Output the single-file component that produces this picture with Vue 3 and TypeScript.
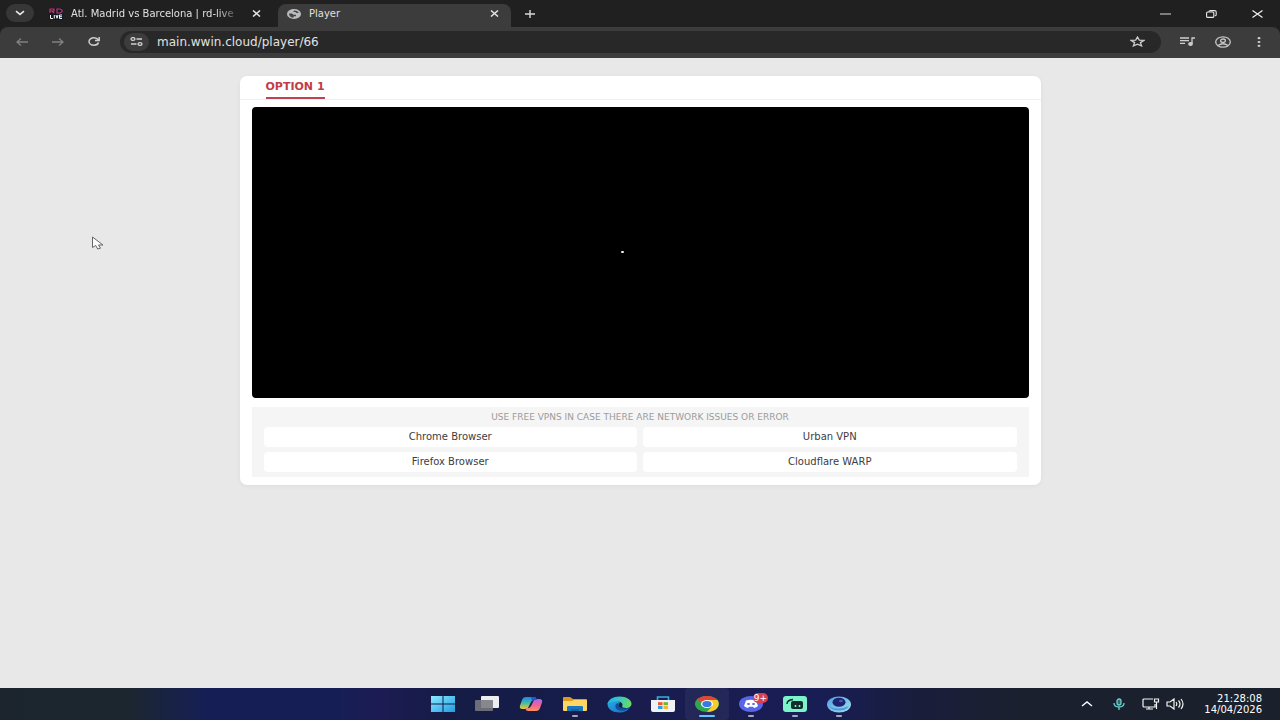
<script setup lang="ts">
import { ref } from 'vue'

interface VpnLink {
  label: string
  href: string
}

const address = ref('main.wwin.cloud/player/66')
const links: VpnLink[] = [
  { label: 'Chrome Browser', href: '#chrome' },
  { label: 'Urban VPN', href: '#urban' },
  { label: 'Firefox Browser', href: '#firefox' },
  { label: 'Cloudflare WARP', href: '#warp' },
]
</script>

<template>
  <div class="screen">
    <header class="browser">
      <div class="tabs">
        <button class="tab-search" aria-label="Search tabs">
          <svg width="10" height="6" viewBox="0 0 10 6" fill="none" stroke="#e8e8e8" stroke-width="1.6"><path d="M1 1.2l4 3.2 4-3.2" /></svg>
        </button>
        <div class="tab">
          <svg class="favicon" width="14" height="12" viewBox="0 0 14 12" fill="none">
            <rect width="14" height="12" fill="#101a24" />
            <path d="M1 5V1h4v2H1m2 0l2 2M8 1v4h3l2-1V2l-2-1z" stroke="#c2396f" stroke-width="1.2" />
            <path d="M1.5 7v3.5H4M5.3 7v3.5M7 7l1 3.3L9 7M13 7h-2.500v3.500H13M10.500 8.700H13" stroke="#f2f2f2" />
          </svg>
          <button class="tab-title faded">Atl. Madrid vs Barcelona | rd-live</button>
          <button class="tab-close" aria-label="Close Atl. Madrid tab">
            <svg width="9" height="7" viewBox="0 0 9 7" stroke="#e3e3e3" stroke-width="1.5"><path d="M1 .5l7 6M8 .5l-7 6" /></svg>
          </button>
        </div>
        <div class="tab active">
          <svg class="favicon" width="14" height="10" viewBox="0 0 14 10">
            <ellipse cx="7" cy="5" rx="7" ry="5" fill="#b9bbbc" />
            <path d="M2 4.500h3l1.500 1.300H9V7.300H7L6 8.700C3.500 8.500 1.800 6.500 2 4.500zM7.500 1.500c2 .1 3.700 1 4.300 2.500H9.500L8.500 3H6z" fill="#454647" />
          </svg>
          <button class="tab-title">Player</button>
          <button class="tab-close" aria-label="Close Player tab">
            <svg width="9" height="7" viewBox="0 0 9 7" stroke="#e3e3e3" stroke-width="1.5"><path d="M1 .5l7 6M8 .5l-7 6" /></svg>
          </button>
        </div>
        <button class="new-tab" aria-label="New tab">
          <svg width="12" height="8" viewBox="0 0 12 8" stroke="#d8d8d8" stroke-width="1.4"><path d="M1 4h10M6 0v8" /></svg>
        </button>
        <div class="window-controls">
          <button aria-label="Minimize"><svg width="11" height="8" viewBox="0 0 11 8"><path d="M0 4h11" stroke="#d8d8d8" /></svg></button>
          <button aria-label="Restore">
            <svg width="11" height="8" viewBox="0 0 11 8" fill="none" stroke="#e8e8e8" stroke-width="1.1"><rect x=".6" y="2" width="7.200" height="5.400" rx="1" /><path d="M3 1.800Q3 .6 4.500.6h4q1.700 0 1.700 1.500v2.600q0 1-1.500 1.100" /></svg>
          </button>
          <button aria-label="Close window"><svg width="11" height="8" viewBox="0 0 11 8" stroke="#f0f0f0" stroke-width="1.200"><path d="M.5.5l10 7M10.500.5l-10 7" /></svg></button>
        </div>
      </div>

      <nav class="toolbar" aria-label="Navigation">
        <button aria-label="Back"><svg width="12" height="8" viewBox="0 0 12 8" fill="none" stroke="#808080" stroke-width="1.300"><path d="M12 4H1M5 .5L1 4l4 3.500" /></svg></button>
        <button aria-label="Forward"><svg width="12" height="8" viewBox="0 0 12 8" fill="none" stroke="#808080" stroke-width="1.300"><path d="M0 4h11M7 .5L11 4 7 7.500" /></svg></button>
        <button aria-label="Reload"><svg width="12" height="9" viewBox="0 0 12 9" fill="none" stroke="#cfcfcf" stroke-width="1.500"><path d="M10.500 5.500C10 7.200 8.200 8.200 6 8.200 3.200 8.200 1 6.500 1 4.500S3.200.8 6 .8c2 0 3.500.7 4.600 2.300M11.200 0v3.500H7" /></svg></button>
        <div class="omnibox">
          <button class="site-info" aria-label="Site information">
            <svg width="13" height="9" viewBox="0 0 13 9" fill="none" stroke="#d0d0d0" stroke-width="1.300"><ellipse cx="3" cy="2" rx="2" ry="1.400" /><path d="M6.500 2H12M1 7h5.500" /><ellipse cx="10" cy="7" rx="2" ry="1.400" /></svg>
          </button>
          <input v-model="address" class="address" type="text" aria-label="Address" spellcheck="false" />
          <button class="star" aria-label="Bookmark this page">
            <svg width="15" height="11" viewBox="0 0 15 11" fill="none" stroke="#cecece" stroke-width="1.300"><path d="M7.500 1l1.800 3.100 4.700.3-3.600 2.200 1.200 3.300-4.100-1.800-4.100 1.800 1.200-3.300L1 4.400l4.700-.3z" /></svg>
          </button>
        </div>
        <button aria-label="Media controls"><svg width="15" height="9" viewBox="0 0 15 9" fill="none" stroke="#cecece" stroke-width="1.300"><path d="M0 1h9M0 3.700h9M0 6.400h5M12 7V1h3" /><ellipse cx="10.500" cy="7" rx="1.700" ry="1.300" fill="#cecece" /></svg></button>
        <button aria-label="Profile"><svg width="16" height="12" viewBox="0 0 16 12" fill="none" stroke="#c8c8c8" stroke-width="1.300"><ellipse cx="8" cy="6" rx="7.300" ry="5.200" /><ellipse cx="8" cy="4.700" rx="2.400" ry="1.700" /><path d="M3 9.500Q8 6 13 9.500" /></svg></button>
        <button aria-label="Menu"><svg width="4" height="10" viewBox="0 0 4 10" fill="#d0d0d0"><ellipse cx="2" cy="1.200" rx="1.500" ry="1.100" /><ellipse cx="2" cy="5" rx="1.500" ry="1.100" /><ellipse cx="2" cy="8.800" rx="1.500" ry="1.100" /></svg></button>
      </nav>
    </header>

    <main class="page">
      <section class="card">
        <div class="options"><button class="option">OPTION 1</button></div>
        <div class="player" role="img" aria-label="Video player"><span class="loader"></span></div>
        <div class="vpn">
          <h2>USE FREE VPNS IN CASE THERE ARE NETWORK ISSUES OR ERROR</h2>
          <div class="vpn-grid">
            <a v-for="link in links" :key="link.label" :href="link.href">{{ link.label }}</a>
          </div>
        </div>
      </section>
      <svg class="cursor" width="14" height="14" viewBox="0 0 14 14"><path d="M1.500 1v10.500l3.200-2 2 3.500 2.800-.8-2-3.200H12z" fill="#fafafa" stroke="#666" /></svg>
    </main>

    <footer class="taskbar">
      <div class="apps">
        <button aria-label="Start">
          <svg width="24" height="16" viewBox="0 0 24 16">
            <defs><linearGradient id="win" x2="1" y2="1"><stop stop-color="#8ceaff" /><stop offset="1" stop-color="#1f9de4" /></linearGradient></defs>
            <path d="M0 0h11.500v7.500H0zM12.500 0H24v7.500H12.500zM0 8.500h11.500V16H0zM12.500 8.500H24V16H12.500z" fill="url(#win)" />
          </svg>
        </button>
        <button aria-label="Task view">
          <svg width="26" height="16" viewBox="0 0 26 16"><rect x="7" y="0" width="18" height="12" rx="1" fill="#eceef0" /><rect x="1" y="4" width="18" height="11" rx="1" fill="#777a7e" fill-opacity=".88" /></svg>
        </button>
        <button aria-label="Copilot">
          <svg width="24" height="16" viewBox="0 0 24 16">
            <defs>
              <linearGradient id="copA" x2="0" y2="1"><stop stop-color="#1688f4" /><stop offset=".5" stop-color="#48bc9a" /><stop offset="1" stop-color="#eecb32" /></linearGradient>
              <linearGradient id="copB" x2="0" y2="1"><stop stop-color="#a06bf0" /><stop offset=".5" stop-color="#ef609b" /><stop offset="1" stop-color="#f89558" /></linearGradient>
            </defs>
            <path d="M7 1h8q2 0 2.500 2l.5 1h-3q-2 0-3 2L9.500 11Q8.800 13 6 13H3.500Q0 13 1 9.500L3 4Q4 1 7 1z" fill="url(#copA)" />
            <path d="M17 15H9q-2 0-2.500-2L6 12h3q2 0 3-2l2.500-5Q15.200 3 18 3h2.500Q24 3 23 6.500L21 12q-1 3-4 3z" fill="url(#copB)" />
            <path d="M12 1h3q2 0 2.500 2l.5 1h-3q-1 0-2 1z" fill="#2655cf" />
          </svg>
        </button>
        <button class="running" aria-label="File Explorer">
          <svg width="26" height="16" viewBox="0 0 26 16"><path d="M1 2q0-1 1-1h6l3 2h13q1 0 1 1v4H1z" fill="#dc9b1d" /><path d="M1 5h9l2-1h13v10q0 1-1 1H2q-1 0-1-1z" fill="#ffd663" /><path d="M5 15v-4q0-1 1.500-1h13q1.500 0 1.500 1v4z" fill="#1878be" /><path d="M9 15v-2h8v2z" fill="#1560a3" /></svg>
        </button>
        <button aria-label="Microsoft Edge">
          <svg width="25" height="17" viewBox="0 0 25 17">
            <defs>
              <linearGradient id="edge" x2="1" y2=".2"><stop stop-color="#1cb6e8" /><stop offset=".5" stop-color="#35c6c8" /><stop offset="1" stop-color="#62dc67" /></linearGradient>
              <linearGradient id="edgeLow" x2="1" y2="1"><stop stop-color="#28aee8" /><stop offset="1" stop-color="#1668c2" /></linearGradient>
            </defs>
            <path d="M.5 8C1 5 4 4 8 4l5 2-2 4c2 3 7 4 12 1.500-2 3-6 5-10.500 5C6 16.500.5 13 .5 8z" fill="url(#edgeLow)" />
            <path d="M.5 8C1.300 3.500 6 .5 12.500.5c7 0 12 3.300 12 7.200 0 2.800-2.500 4.300-5.500 4.300-2.700 0-4.500-.8-3.800-2C16.400 8 14.500 5.200 9.500 5.200 5.500 5.200 2 6.200.5 8z" fill="url(#edge)" />
            <path d="M10 7.200C7.500 9 8 12 11 14c3.500 1.500 8.500.5 12-2.500-3 1.300-7.500 1.200-10-.2C11 10.200 11 8.500 12.500 7.200z" fill="#164c98" />
          </svg>
        </button>
        <button aria-label="Microsoft Store">
          <svg width="24" height="17" viewBox="0 0 24 17"><path d="M6.500 5V1h11v4" fill="none" stroke="#37aee0" stroke-width="1.600" /><path d="M0 4h24v10q0 2-2 2H2q-2 0-2-2z" fill="#f0f1f4" /><path d="M7 6.200h4.500v3H7z" fill="#ef5631" /><path d="M12.500 6.200H17v3h-4.500z" fill="#78b526" /><path d="M7 10h4.500v3H7z" fill="#2aa3df" /><path d="M12.500 10H17v3h-4.500z" fill="#f6b928" /></svg>
        </button>
        <button class="running current" aria-label="Google Chrome">
          <svg width="24" height="16" viewBox="0 0 24 16"><ellipse cx="12" cy="8" rx="12" ry="8" fill="#30a650" /><path d="M12 8L1.600 4C3.500 1.700 7.500 0 12 0s8.500 1.700 10.400 4z" fill="#e54336" /><path d="M12 4h10.400C26 9 21.500 16 12 16l5.200-6z" fill="#fbca2c" /><ellipse cx="12" cy="8" rx="6" ry="4" fill="#fff" /><ellipse cx="12" cy="8" rx="4.700" ry="3.100" fill="#3779e5" /></svg>
        </button>
        <button class="running" aria-label="Discord, more than nine notifications">
          <svg width="24" height="16" viewBox="0 0 24 16"><ellipse cx="12" cy="8" rx="12" ry="8" fill="#5965e8" /><path d="M7 4.500Q12 3 17 4.500l2 5.500q-1.500 1.500-4 2l-1-1.300h-4L9 12q-2.500-.5-4-2z" fill="#fff" /><ellipse cx="9.500" cy="8" rx="1.500" ry="1.100" fill="#5965e8" /><ellipse cx="14.500" cy="8" rx="1.500" ry="1.100" fill="#5965e8" /></svg>
          <span class="badge">9+</span>
        </button>
        <button class="running" aria-label="Streaming app">
          <svg width="24" height="17" viewBox="0 0 24 17"><rect width="24" height="16" rx="3" fill="#7cf3cb" /><rect x="8" y="5" width="12" height="8" rx="2" fill="#102c2b" /><path d="M4 8q0-4 6-4.500" fill="none" stroke="#102c2b" stroke-width="1.500" /><path d="M12.500 9v2M16.500 9v2" stroke="#7cf3cb" stroke-width="1.600" /></svg>
        </button>
        <button class="running" aria-label="Capture app">
          <svg width="24" height="17" viewBox="0 0 24 17"><defs><linearGradient id="orb" x2="1" y2="1"><stop stop-color="#4e9de0" /><stop offset="1" stop-color="#a4e0f2" /></linearGradient></defs><ellipse cx="12" cy="8.500" rx="12" ry="8" fill="url(#orb)" /><path d="M2 10q7 5 20 0-3 4.500-10 4.500T2 10z" fill="#4b9bd8" /><ellipse cx="12" cy="6.300" rx="6.500" ry="4.500" fill="#1d246c" /><ellipse cx="14" cy="5" rx="2" ry="1.200" fill="#4658a8" /></svg>
        </button>
      </div>
      <div class="tray">
        <button class="tray-wide" aria-label="Show hidden icons"><svg width="12" height="6" viewBox="0 0 12 6" fill="none" stroke="#fff" stroke-width="1.400"><path d="M1 5l5-4 5 4" /></svg></button>
        <button class="tray-wide" aria-label="Microphone"><svg width="12" height="12" viewBox="0 0 12 12" fill="none" stroke="#69d1ce" stroke-width="1.300"><rect x="4" y="1" width="4" height="6" rx="2" fill="#31696c" /><path d="M1 5q0 4 5 4t5-4M6 9v3" /></svg></button>
        <button class="network" aria-label="Network"><svg width="18" height="12" viewBox="0 0 18 12" fill="none" stroke="#f3f3f3" stroke-width="1.200"><path d="M11 1H2Q1 1 1 2v6q0 1 1 1h11V6M4 11h7M7 9v2M12.500 1h4v3h-4zM14.500 4v7" /></svg></button>
        <button class="sound" aria-label="Volume"><svg width="18" height="12" viewBox="0 0 18 12" fill="none" stroke="#f3f3f3" stroke-width="1.200"><path d="M1 4h3l4-3v10L4 8H1zM10 4q1.600 2 0 4M12.500 2.500q3 3.500 0 7M15 1q4 5 0 10" /></svg></button>
        <button class="clock"><time>21:28:08</time><time>14/04/2026</time></button>
      </div>
    </footer>
  </div>
</template>

<style>
body {
  margin: 0;
}
</style>

<style scoped>
.screen {
  display: flex;
  flex-direction: column;
  min-height: 100vh;
  background: #e8e8e8;
  font-family: "DejaVu Sans", sans-serif;
}
button {
  display: flex;
  align-items: center;
  justify-content: center;
  padding: 0;
  border: 0;
  background: none;
  color: inherit;
  font: inherit;
}
svg {
  display: block;
  flex: none;
}
.browser {
  background: #1f201f;
}
.tabs {
  display: flex;
  height: 27px;
  color: #e0e0e0;
  font-size: 10px;
}
.tab-search {
  width: 28px;
  height: 18px;
  margin: 4px 6px;
  border-radius: 10px;
  background: #373737;
}
.tab {
  display: flex;
  align-items: center;
  box-sizing: border-box;
  width: 233px;
  height: 23px;
  margin-top: 4px;
  padding: 0 7px 4px 9px;
}
.tab.active {
  margin-left: 5px;
  border-radius: 8px 8px 0 0;
  background: #3c3c3c;
}
.favicon {
  margin-right: 8px;
}
.tab-title {
  flex: 1;
  min-width: 0;
  overflow: hidden;
  justify-content: flex-start;
  white-space: nowrap;
}
.faded {
  mask-image: linear-gradient(to right, #000 85%, transparent);
}
.tab-close {
  width: 20px;
  height: 18px;
  margin-left: 4px;
}
.new-tab {
  width: 38px;
}
.window-controls {
  display: flex;
  margin-left: auto;
}
.window-controls button {
  width: 46px;
}
.toolbar {
  display: flex;
  align-items: center;
  box-sizing: border-box;
  height: 31px;
  padding: 0 3px 2px 4px;
  border-radius: 8px 8px 0 0;
  background: #3c3c3c;
}
.toolbar > button {
  width: 36px;
  height: 24px;
}
.omnibox {
  display: flex;
  flex: 1;
  align-items: center;
  height: 22px;
  margin: 0 8px;
  border-radius: 12px;
  background: #282828;
}
.site-info {
  width: 25px;
  height: 18px;
  margin-left: 4px;
  border-radius: 10px;
  background: #3c3c3c;
}
.address {
  flex: 1;
  min-width: 0;
  margin-left: 8px;
  padding: 0;
  border: 0;
  outline: 0;
  background: none;
  color: #e2e2e2;
  font: 12px "DejaVu Sans", sans-serif;
}
.star {
  width: 48px;
  height: 22px;
}
.page {
  position: relative;
  flex: 1;
  padding: 18px 16px;
}
.card {
  box-sizing: border-box;
  max-width: 801px;
  margin: 0 auto;
  padding-bottom: 8px;
  border-radius: 7px;
  background: #fff;
  box-shadow: 0 1px 5px #0000000d;
}
.options {
  display: flex;
  height: 23px;
  padding: 0 26px;
  border-bottom: 1px solid #f0f0f0;
}
.option {
  border-bottom: 2px solid #bd4350;
  color: #c13c49;
  font-size: 11px;
  font-weight: 700;
}
.player {
  display: flex;
  align-items: center;
  justify-content: center;
  aspect-ratio: 8 / 3;
  margin: 7px 12px 9px;
  border-radius: 4px;
  background: #000;
}
.loader {
  width: 3px;
  height: 2px;
  margin: 0 36px 2px 0;
  border-radius: 1px;
  background: #eee;
}
.vpn {
  margin: 0 12px;
  padding: 0 12px 5px;
  background: #f5f5f5;
}
h2 {
  margin: 0;
  color: #9b9b9b;
  font-size: 9px;
  font-weight: 400;
  line-height: 20px;
  text-align: center;
}
.vpn-grid {
  display: grid;
  grid-template-columns: 1fr 1fr;
  gap: 5px 6px;
}
.vpn-grid a {
  border-radius: 4px;
  background: #fff;
  color: #3d3d3d;
  font-size: 10px;
  line-height: 20px;
  text-align: center;
  text-decoration: none;
}
.cursor {
  position: absolute;
  top: 178px;
  left: 91px;
}
.taskbar {
  display: grid;
  grid-template-columns: 1fr auto 1fr;
  height: 32px;
  background: linear-gradient(90deg, #1c252e 0%, #1b262f 10%, #161f55 16%, #151f55 26%, #1c1b52 30%, #141c45 35%, #191c4d 50%, #181d55 64%, #191d3b 72%, #1b202e 80%, #1a202c 100%);
}
.apps {
  display: flex;
  grid-column: 2;
  padding-left: 2px;
}
.apps button {
  position: relative;
  width: 44px;
}
.apps .current {
  border-radius: 4px;
  background: #ffffff0d;
}
.running::after {
  position: absolute;
  bottom: 3px;
  width: 6px;
  height: 2px;
  border-radius: 1px;
  background: #a5a9b8;
  content: "";
}
.current::after {
  width: 16px;
  background: #62c8f4;
}
.badge {
  position: absolute;
  top: 5px;
  right: 5px;
  width: 15px;
  border-radius: 5px;
  background: #d9404f;
  color: #fff;
  font-size: 9px;
  line-height: 10px;
}
.tray {
  display: flex;
  justify-content: flex-end;
  padding-right: 18px;
  color: #fff;
}
.tray-wide {
  width: 32px;
}
.network,
.sound {
  width: 24px;
}
.network {
  margin-left: 4px;
}
.clock {
  flex-direction: column;
  align-items: flex-end;
  min-width: 75px;
  font-size: 10px;
  line-height: 11px;
}
</style>
